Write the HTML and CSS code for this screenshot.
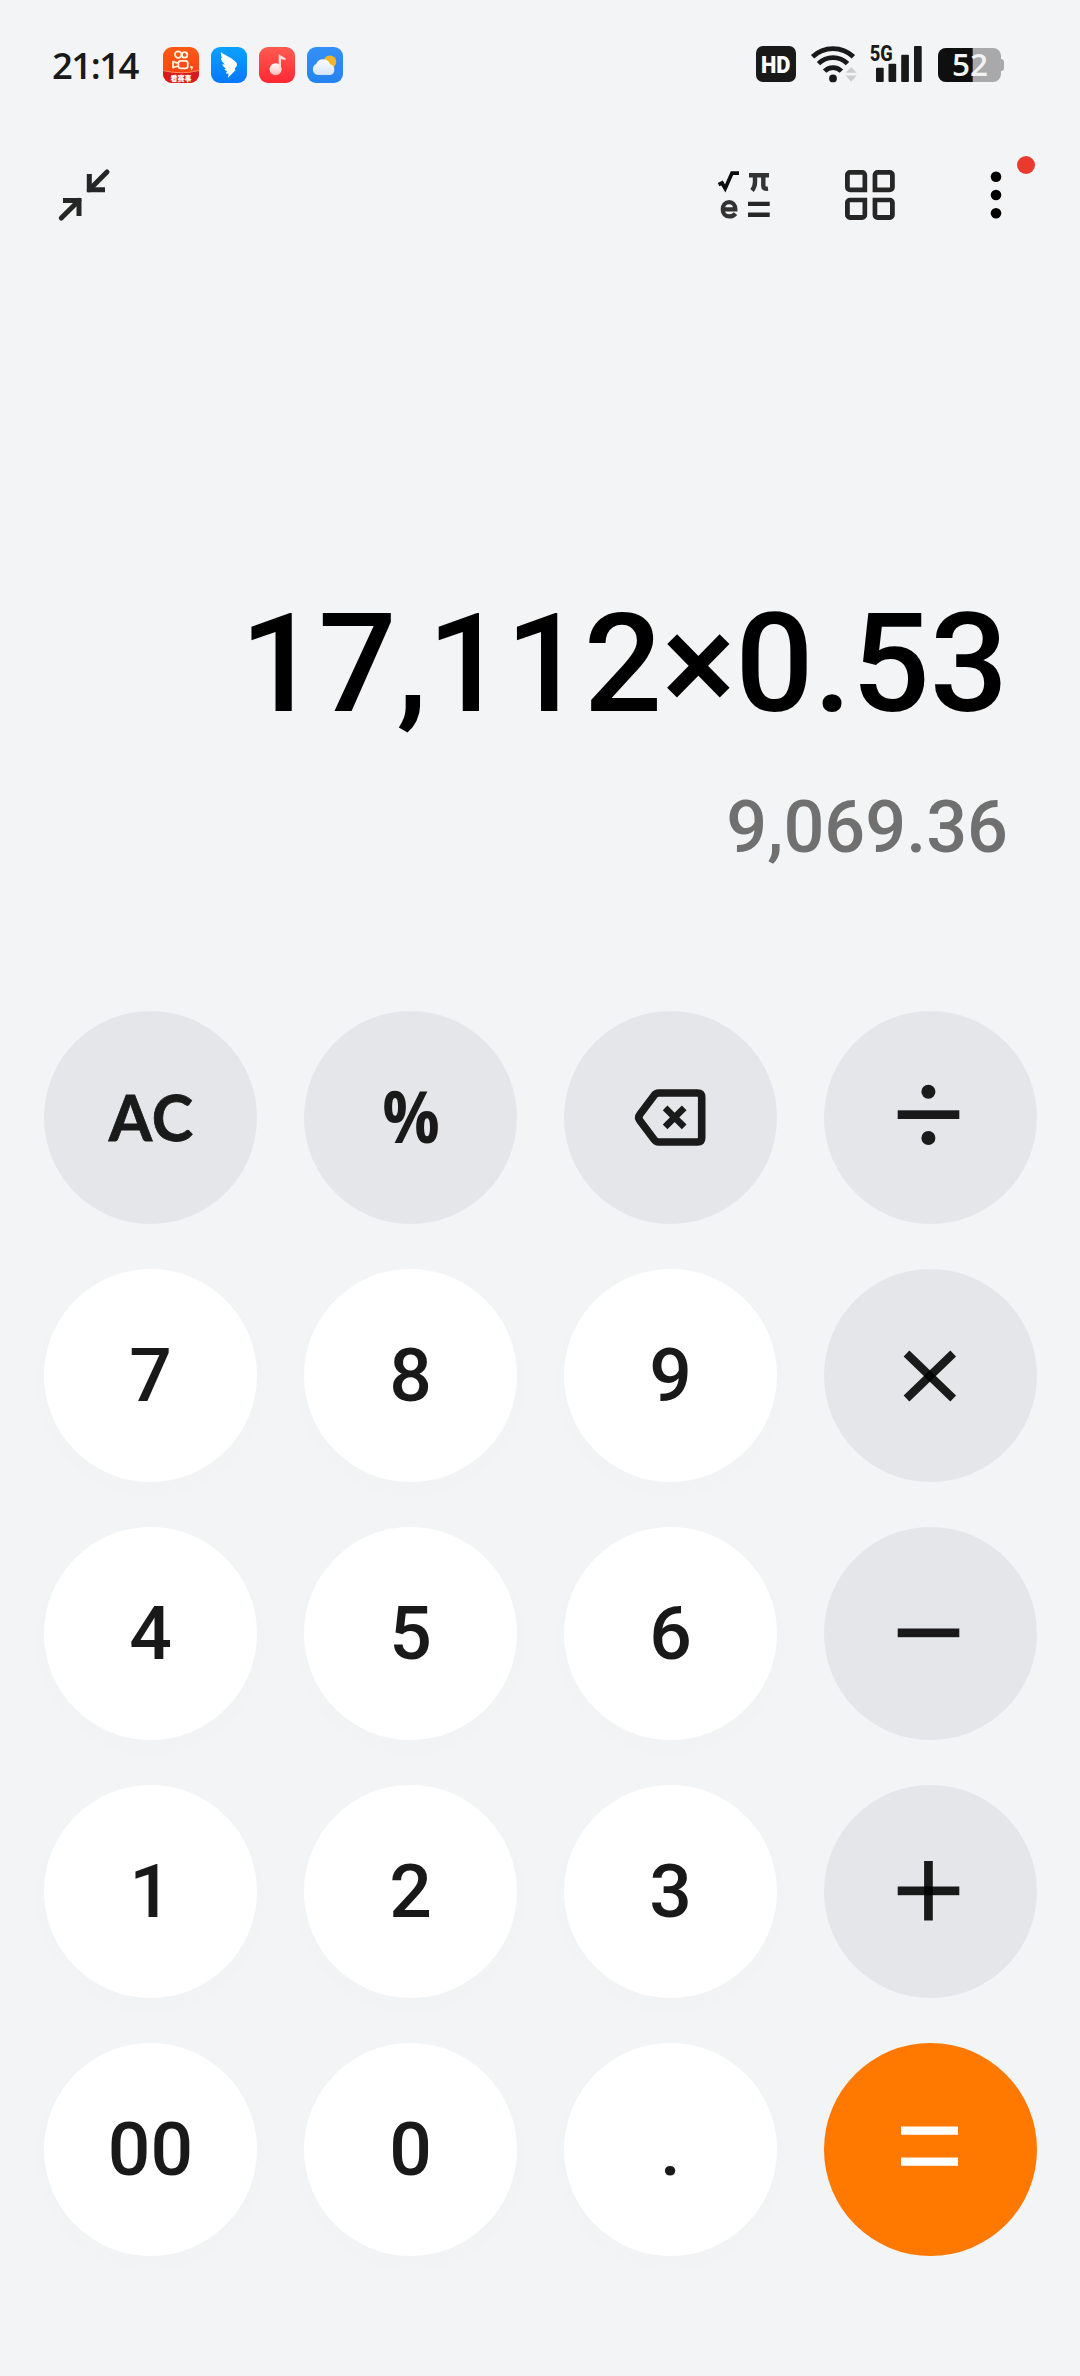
FILE: index.html
```html
<!DOCTYPE html>
<html lang="zh-CN">
<head>
<meta charset="utf-8">
<title>Calculator</title>
<link rel="stylesheet" href="styles.css">
</head>
<body>
<div class="screen">
  <div class="status">
    <span class="time">21:14</span>
    <div class="apps">
      <svg class="app" viewBox="0 0 36 36">
        <defs>
          <linearGradient id="ks" x1="0" y1="0" x2="0" y2="1"><stop offset="0" stop-color="#ff5a14"/><stop offset="1" stop-color="#fa3c14"/></linearGradient>
          <clipPath id="ksc"><rect width="36" height="36" rx="9"/></clipPath>
        </defs>
        <g clip-path="url(#ksc)">
          <rect width="36" height="36" fill="url(#ks)"/>
          <path d="M0 23.5Q18 28 36 23.5V36H0Z" fill="#d81a1c"/>
          <path d="M0 23.5Q18 28 36 23.5" fill="none" stroke="#ff9a6a" stroke-width=".9"/>
          <g fill="none" stroke="#fff3e4" stroke-width="1.8">
            <circle cx="15.2" cy="7.6" r="3.3"/><circle cx="21.6" cy="7.9" r="2.7"/>
            <rect x="15.4" y="13.9" width="9.4" height="7.4" rx="2.4"/>
            <path d="M15 16.2l-5-1.6v6l5-1.6" stroke-linejoin="round"/>
          </g>
          <path d="M27.3 19.2h2.4v1.8q-.4 1.8-2 2.3l.6-2h-1z" fill="#fff3e4"/>
        </g>
        <text class="ks-text" x="7.6" y="33.6" textLength="21">看赛事</text>
      </svg>
      <svg class="app" viewBox="0 0 36 36">
        <defs><linearGradient id="dt" x1="0" y1="0" x2="0" y2="1"><stop offset="0" stop-color="#0aa2ff"/><stop offset="1" stop-color="#0877fb"/></linearGradient></defs>
        <rect width="36" height="36" rx="9" fill="url(#dt)"/>
        <path d="M10 5C13 8 22 11 25.300 15.500C27 17.800 25.500 19.800 23.800 21.500L24.500 23.300L16.800 31L17.600 26.500L14.800 26.400L16.100 23.900C14.800 23.800 13.700 23 13.300 22L15 21.500C12.800 20.500 11.700 19 11.400 17.300L14 17.500C11.200 15.400 9.800 12.800 10 10.500L11.600 11.300C10 9 9.500 7 10 5Z" fill="#fff"/>
      </svg>
      <svg class="app" viewBox="0 0 36 36">
        <defs>
          <linearGradient id="mu" x1="0" y1="0" x2="0" y2="1"><stop offset="0" stop-color="#ff5b50"/><stop offset="1" stop-color="#ff2733"/></linearGradient>
          <linearGradient id="nt" x1="0" y1="0" x2="0" y2="1"><stop offset="0" stop-color="#fff"/><stop offset="1" stop-color="#ffb9bb"/></linearGradient>
        </defs>
        <rect width="36" height="36" rx="9" fill="url(#mu)"/>
        <circle cx="16.600" cy="22.300" r="6" fill="url(#nt)"/>
        <path d="M19.700 7.200L26.600 11.200V13L22 12.300V22.500H19.700Z" fill="#ffdcd8"/>
      </svg>
      <svg class="app" viewBox="0 0 36 36">
        <defs>
          <linearGradient id="we" x1="0" y1="0" x2="0" y2="1"><stop offset="0" stop-color="#3390f8"/><stop offset="1" stop-color="#2583f0"/></linearGradient>
          <linearGradient id="cl" x1="0" y1="0" x2="0" y2="1"><stop offset="0" stop-color="#fff"/><stop offset="1" stop-color="#d3e4fb"/></linearGradient>
        </defs>
        <rect width="36" height="36" rx="9" fill="url(#we)"/>
        <circle cx="23" cy="14.800" r="6.300" fill="#f5b52a"/>
        <path d="M11 28A5.800 5.800 0 0 1 9.200 17A7.400 7.400 0 0 1 23 17.200A5.600 5.600 0 0 1 23.500 28Z" fill="url(#cl)"/>
      </svg>
    </div>
    <div class="indicators">
      <svg width="40" height="40" viewBox="756 45 40 40">
        <rect x="756" y="46" width="40" height="36" rx="7" fill="#191919"/>
        <text class="hd" x="761" y="73.200" textLength="29.500" lengthAdjust="spacingAndGlyphs">HD</text>
      </svg>
      <svg width="46" height="40" viewBox="811 45 46 40">
        <g fill="none" stroke="#191919" stroke-width="4.800">
          <path d="M812.600 56.800A29.500 29.500 0 0 1 853.400 56.800"/>
          <path d="M818.500 63.600A20.500 20.500 0 0 1 847.500 63.600"/>
          <path d="M824.600 71.200A11.600 11.600 0 0 1 841.400 71.200"/>
        </g>
        <circle cx="833" cy="78.400" r="3.900" fill="#191919"/>
        <path d="M851.200 67L856.700 72.800H845.700ZM851.200 81.700L856.700 75.600H845.700Z" fill="#cdcdcf"/>
      </svg>
      <svg width="52" height="40" viewBox="870 45 52 40">
        <text class="g5" x="869.800" y="61" textLength="23" lengthAdjust="spacingAndGlyphs">5G</text>
        <g fill="#191919">
          <rect x="876" y="67.700" width="7.700" height="14.300" rx="1"/>
          <rect x="888.500" y="63.700" width="7.700" height="18.300" rx="1"/>
          <rect x="901.200" y="54.700" width="7.700" height="27.300" rx="1"/>
          <rect x="914" y="46" width="7.700" height="36" rx="1"/>
        </g>
      </svg>
      <svg width="66" height="40" viewBox="938 45 66 40">
        <rect x="938" y="48" width="63" height="34" rx="8" fill="#a9a9ab"/>
        <path d="M1001 59Q1004 59 1004 62V68Q1004 71 1001 71Z" fill="#a9a9ab"/>
        <path d="M972.700 48H946A8 8 0 0 0 938 56V74A8 8 0 0 0 946 82H972.700Z" fill="#0f0f0f"/>
        <text class="batt" x="952" y="76" textLength="36" lengthAdjust="spacingAndGlyphs">52</text>
      </svg>
    </div>
  </div>

  <div class="toolbar">
    <svg class="tool" viewBox="54 165 60 60" fill="none" stroke="#262626" stroke-width="5">
      <path d="M107 171.900L89.300 189.700" stroke-linecap="round"/>
      <path d="M89.300 174V189.700H105"/>
      <path d="M61.300 218.100L79 200.400" stroke-linecap="round"/>
      <path d="M63 200.400H79V216"/>
    </svg>
    <div class="tools">
      <svg class="tool" viewBox="714 165 60 60">
        <path d="M718.600 184.600L722 183L725.200 188.500L732 173.100H739" fill="none" stroke="#0c0c0c" stroke-width="3.700"/>
        <path d="M749 175.200H769M755 175V182Q755 187 752 190.500M763.300 175V186Q763.300 189.300 768 188.600" fill="none" stroke="#333" stroke-width="4.400"/>
        <path d="M722.800 209.300H735.300C735.300 204.800 732.700 202.200 729.200 202.200C725.300 202.200 722.800 205.300 722.800 209.400C722.800 213.700 725.500 216.400 729.400 216.400C732 216.400 734 215.500 735.500 213.600" fill="none" stroke="#333" stroke-width="4.300"/>
        <path d="M748 201.700H769.700V206.100H748ZM748 212.400H769.700V216.900H748Z" fill="#262626"/>
      </svg>
      <svg class="tool" viewBox="840 165 60 60" fill="#262626" fill-rule="evenodd">
        <path d="M850 170H862A5 5 0 0 1 867.200 175V192.200H850A5 5 0 0 1 845 187.200V175A5 5 0 0 1 850 170ZM849.800 174.800V187.500H862.500V174.800Z"/>
        <path d="M877.800 170H889.800A5 5 0 0 1 894.800 175V187.200A5 5 0 0 1 889.800 192.200H872.600V175A5 5 0 0 1 877.800 170ZM877.300 174.800V187.500H890V174.800Z"/>
        <path d="M850 197.700H867.200V214.700A5 5 0 0 1 862.200 219.900H850A5 5 0 0 1 845 214.700V202.700A5 5 0 0 1 850 197.700ZM849.800 202.300V215H862.500V202.300Z"/>
        <path d="M872.600 197.700H889.800A5 5 0 0 1 894.800 202.700V214.700A5 5 0 0 1 889.800 219.900H877.800A5 5 0 0 1 872.600 214.700ZM877.300 202.300V215H890V202.300Z"/>
      </svg>
      <div class="more">
        <svg class="tool" viewBox="966 165 60 60">
          <circle cx="996" cy="176.700" r="5.300"/><circle cx="996" cy="195" r="5.300"/><circle cx="996" cy="213.300" r="5.300"/>
        </svg>
        <span class="badge"></span>
      </div>
    </div>
  </div>

  <div class="display">
    <div class="expression">17,112×0.53</div>
    <div class="result">9,069.36</div>
  </div>

  <div class="keypad">
    <div class="key fn"><span class="ac">AC</span></div>
    <div class="key fn"><span class="pct">%</span></div>
    <div class="key fn">
      <svg viewBox="0 0 213 213" fill="none" stroke="#191a19" stroke-width="7.600">
        <path d="M94.500 82H133.500Q137.700 82 137.700 86.200V126.800Q137.700 131 133.500 131H94.500Q92 131 90.300 128.800L76 109.800Q73.500 106.500 76 103.200L90.300 84.200Q92 82 94.500 82Z"/>
        <path d="M101.100 96.800L120.200 115.900M120.200 96.800L101.100 115.900" stroke-width="6.600"/>
      </svg>
    </div>
    <div class="key fn">
      <svg viewBox="0 0 213 213" fill="#191a19"><circle cx="104.400" cy="80.700" r="7"/><circle cx="104.400" cy="127" r="7"/><rect x="73.700" y="99.300" width="61.600" height="8.700"/></svg>
    </div>

    <div class="key">7</div>
    <div class="key">8</div>
    <div class="key">9</div>
    <div class="key fn">
      <svg viewBox="0 0 213 213" stroke="#000" stroke-opacity=".89" stroke-width="8.300"><path d="M82.500 84.500L129.200 129.500"/><path d="M129.200 84.500L82.500 129.500"/></svg>
    </div>

    <div class="key">4</div>
    <div class="key">5</div>
    <div class="key">6</div>
    <div class="key fn">
      <svg viewBox="0 0 213 213" fill="#191a19"><rect x="73.700" y="101.500" width="61.600" height="8.700"/></svg>
    </div>

    <div class="key">1</div>
    <div class="key">2</div>
    <div class="key">3</div>
    <div class="key fn">
      <svg viewBox="0 0 213 213" fill="#000" fill-opacity=".89"><rect x="73.700" y="101.500" width="61.600" height="8.700"/><rect x="100.100" y="76" width="8.700" height="59.500"/></svg>
    </div>

    <div class="key">00</div>
    <div class="key">0</div>
    <div class="key">.</div>
    <div class="key equals">
      <svg viewBox="0 0 213 213" fill="#fff"><rect x="77" y="83.500" width="57" height="8.300"/><rect x="77" y="114.500" width="57" height="8.300"/></svg>
    </div>
  </div>
</div>
</body>
</html>
```

FILE: styles.css
```css
* { box-sizing: border-box; }

body {
  margin: 0;
  background: #f3f4f6;
  font-family: Roboto, "Noto Sans CJK SC", sans-serif;
  font-weight: 500;
}

svg { display: block; flex: none; overflow: visible; }

.screen {
  width: 1080px;
  height: 2376px;
  overflow: hidden;
  background: #f3f4f6;
}

/* Status bar */
.status {
  height: 130px;
  padding: 0 76px 0 52px;
  display: flex;
  align-items: center;
}

.time {
  width: 111px;
  font: 650 36.500px/50px "Open Sans", sans-serif;
  letter-spacing: -1.500px;
  color: #191919;
  white-space: nowrap;
}

.apps { display: flex; gap: 12px; }
.app { width: 36px; height: 36px; }
.ks-text { font: 900 7px "Noto Sans CJK SC", sans-serif; fill: #fff; }

.indicators { margin-left: auto; display: flex; }
.indicators svg + svg { margin-left: 15px; }
.indicators svg:nth-child(3) { margin-left: 13px; }
.indicators svg:nth-child(4) { margin-left: 16px; }
.hd { font: 900 24.500px Roboto, sans-serif; fill: #fff; }
.g5 { font: 800 22.500px Roboto, sans-serif; fill: #191919; }
.batt { font: 600 31px "Open Sans", sans-serif; fill: #f3f3f4; }

/* Toolbar */
.toolbar {
  height: 130px;
  padding: 0 54px;
  display: flex;
  align-items: center;
  justify-content: space-between;
}

.tool { width: 60px; height: 60px; }
.tools { display: flex; gap: 66px; }
.more { position: relative; }

.badge {
  position: absolute;
  top: -9px;
  right: -9px;
  width: 18px;
  height: 18px;
  border-radius: 50%;
  background: #ea3a2e;
}

/* Display */
.display {
  height: 751px;
  padding: 323px 72px 0;
  text-align: right;
}

.expression { font-size: 138px; line-height: 162px; letter-spacing: -.200px; color: #000; }
.result { margin-top: 41px; font-size: 72px; line-height: 84px; color: #707070; }

/* Keypad */
.keypad {
  padding: 0 43px 0 44px;
  display: grid;
  grid-template-columns: repeat(4, 213px);
  gap: 45px 47px;
}

.key {
  height: 213px;
  padding-bottom: 1px;
  border-radius: 50%;
  display: flex;
  align-items: center;
  justify-content: center;
  background: #fff;
  color: #191919;
  font-size: 75px;
  line-height: 88px;
  box-shadow: 0 8px 40px rgba(0, 0, 0, .01);
}

.key svg { width: 213px; height: 213px; }
.fn { padding: 0; background: #e5e6ea; color: #191a19; box-shadow: none; }
.equals { padding: 0; background: #ff7800; box-shadow: none; }

.ac {
  font-family: Lato, sans-serif;
  font-weight: 700;
  font-size: 62.500px;
  letter-spacing: 1px;
  -webkit-text-stroke: .800px #191a19;
  padding: 0 0 1px 2px;
}

.pct {
  font-family: "Open Sans", sans-serif;
  font-weight: 750;
  font-size: 71px;
  transform: scaleX(.9);
  padding: 0 0 3px 1px;
}
```
